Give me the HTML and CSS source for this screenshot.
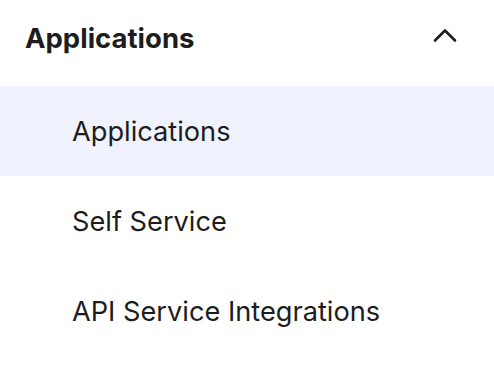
FILE: index.html
```html
<!DOCTYPE html>
<html lang="en">
<head>
    <meta charset="UTF-8">
    <title>Applications</title>
    <link rel="stylesheet" href="styles.css">
</head>
<body>
    <nav class="menu">
        <div class="menu-header">
            <h2>Applications</h2>
            <svg class="chevron" width="24" height="24" viewBox="0 0 24 24" aria-hidden="true">
                <path d="M2 18.5 L12 8.5 L22 18.5" fill="none" stroke="currentColor" stroke-width="2.6" stroke-linecap="round" stroke-linejoin="round"/>
            </svg>
        </div>
        <ul class="menu-list">
            <li class="menu-item active">Applications</li>
            <li class="menu-item">Self Service</li>
            <li class="menu-item">API Service Integrations</li>
        </ul>
    </nav>
</body>
</html>
```

FILE: styles.css
```css
:root {
    --text-color: #1d1d20;
    --active-bg: #f0f3fd;
}

* {
    box-sizing: border-box;
}

body {
    margin: 0;
    font-family: Inter, "Noto Sans", sans-serif;
    color: var(--text-color);
    background: white;
}

.menu-header {
    height: 86px;
    display: flex;
    align-items: center;
    justify-content: space-between;
    padding: 0 37px 0 25px;
}

.menu-header h2 {
    margin: -10px 0 0;
    font-size: 27.5px;
    font-weight: 700;
}

.chevron {
    margin-top: -19px;
}

.menu-list {
    list-style: none;
    margin: 0;
    padding: 0;
}

.menu-item {
    height: 90px;
    display: flex;
    align-items: center;
    padding-left: 72px;
    font-size: 27.2px;
}

.menu-item.active {
    background: var(--active-bg);
}
```
